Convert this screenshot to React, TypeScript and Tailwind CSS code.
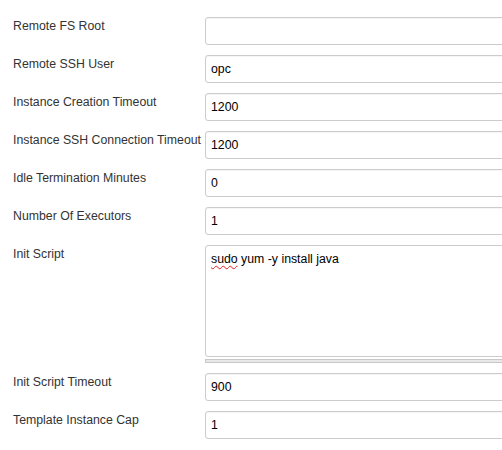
type Field = {
  label: string;
  value: string;
};

const topFields: Field[] = [
  { label: "Remote FS Root", value: "" },
  { label: "Remote SSH User", value: "opc" },
  { label: "Instance Creation Timeout", value: "1200" },
  { label: "Instance SSH Connection Timeout", value: "1200" },
  { label: "Idle Termination Minutes", value: "0" },
  { label: "Number Of Executors", value: "1" },
];

const bottomFields: Field[] = [
  { label: "Init Script Timeout", value: "900" },
  { label: "Template Instance Cap", value: "1" },
];

function FieldRow({ label, value }: Field) {
  return (
    <div className="flex">
      <div className="w-[192px] shrink-0 pt-[2px] leading-[15px] text-[#333]">{label}</div>
      <div className="flex h-[28px] w-[320px] shrink-0 items-center rounded-[3px] border border-[#ccc] bg-white px-[5px] text-black shadow-[inset_0_1px_1px_rgba(0,0,0,0.04)]">
        {value}
      </div>
    </div>
  );
}

export default function App() {
  return (
    <div className="h-[450px] w-[502px] overflow-hidden bg-white font-['Liberation_Sans',Arial,sans-serif] text-[12.3px]">
      <div className="flex flex-col gap-[10px] pl-[13px] pt-[17px]">
        {topFields.map((f) => (
          <FieldRow key={f.label} {...f} />
        ))}

        <div className="flex">
          <div className="w-[192px] shrink-0 pt-[2px] leading-[15px] text-[#333]">Init Script</div>
          <div className="flex w-[320px] shrink-0 flex-col">
            <div className="h-[112px] rounded-[3px] border border-[#ccc] bg-white px-[5px] pt-[6px] leading-[15px] text-black">
              <span className="underline decoration-[#e02020] decoration-wavy decoration-[1px] underline-offset-[2px]">sudo</span>{" "}
              yum -y install java
            </div>
            <div className="mt-[2px] h-[4px] border border-[#c8c8c8] bg-[#e8e8e8]" />
          </div>
        </div>

        {bottomFields.map((f) => (
          <FieldRow key={f.label} {...f} />
        ))}
      </div>
    </div>
  );
}
